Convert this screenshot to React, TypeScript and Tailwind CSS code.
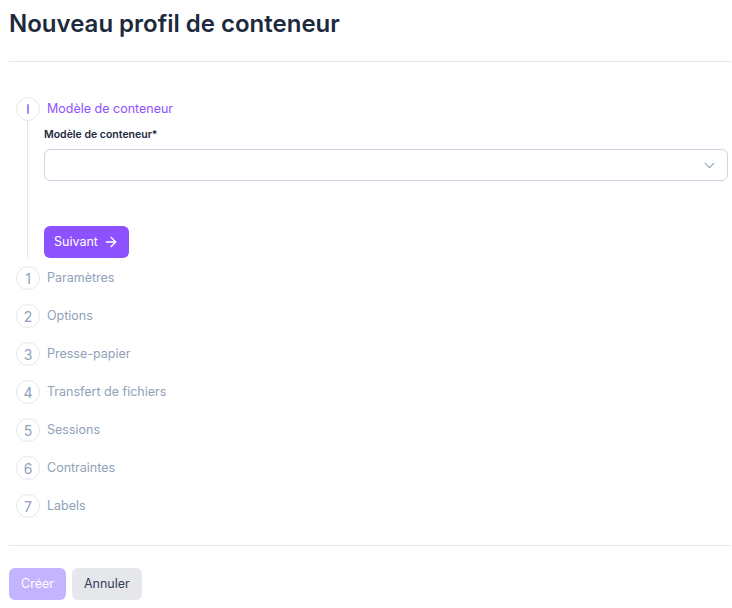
import { ChevronDown, ArrowRight } from 'lucide-react';

const steps = [
  'Paramètres',
  'Options',
  'Presse-papier',
  'Transfert de fichiers',
  'Sessions',
  'Contraintes',
  'Labels',
];

function StepCircle({ children, active }: { children: React.ReactNode; active?: boolean }) {
  return (
    <div
      className={`w-6 h-6 shrink-0 rounded-full border border-gray-200 flex items-center justify-center text-[14px] ${
        active ? 'text-violet-400' : 'text-slate-400'
      }`}
    >
      {children}
    </div>
  );
}

export default function App() {
  return (
    <div className="min-h-screen bg-white pl-[9px] pr-[1px] pt-2 font-['Inter','Liberation_Sans',sans-serif]">
      <h1 className="text-2xl leading-8 font-semibold text-slate-800">Nouveau profil de conteneur</h1>
      <div className="mt-[21px] border-t border-gray-200" />

      <div className="mt-[35px] pl-[7px]">
        {/* active step */}
        <div className="flex items-center gap-[7px] h-6">
          <StepCircle active>
            <span className="block w-[2px] h-[10px] bg-violet-400 rounded-sm" />
          </StepCircle>
          <span className="text-[12.5px] text-violet-500">Modèle de conteneur</span>
        </div>
        <div className="ml-[11px] border-l border-gray-200 pl-[16px] pt-[6px] mr-[3px]">
          <label className="block text-[10.5px] leading-4 font-semibold text-slate-800">
            Modèle de conteneur*
          </label>
          <div className="mt-[6px] h-8 rounded-md border border-slate-300 flex items-center justify-end pr-[9px]">
            <ChevronDown size={17} className="text-slate-400" strokeWidth={1.5} />
          </div>
          <button className="mt-[45px] h-8 px-[10px] rounded-md bg-violet-500 text-white text-[12.5px] flex items-center gap-[5px]">
            Suivant
            <ArrowRight size={16} strokeWidth={2} />
          </button>
        </div>

        <div className="mt-[8px] flex flex-col gap-[14px]">
          {steps.map((s, i) => (
            <div key={s} className="flex items-center gap-[7px] h-6">
              <StepCircle>{i + 1}</StepCircle>
              <span className="text-[12.5px] text-slate-400">{s}</span>
            </div>
          ))}
        </div>
      </div>

      <div className="mt-[27px] border-t border-gray-200" />
      <div className="mt-[22px] flex gap-[6px]">
        <button className="h-8 px-3 rounded-md bg-violet-300 text-white text-[12.5px]">Créer</button>
        <button className="h-8 px-3 rounded-md bg-gray-200 text-gray-700 text-[12.5px]">Annuler</button>
      </div>
    </div>
  );
}
